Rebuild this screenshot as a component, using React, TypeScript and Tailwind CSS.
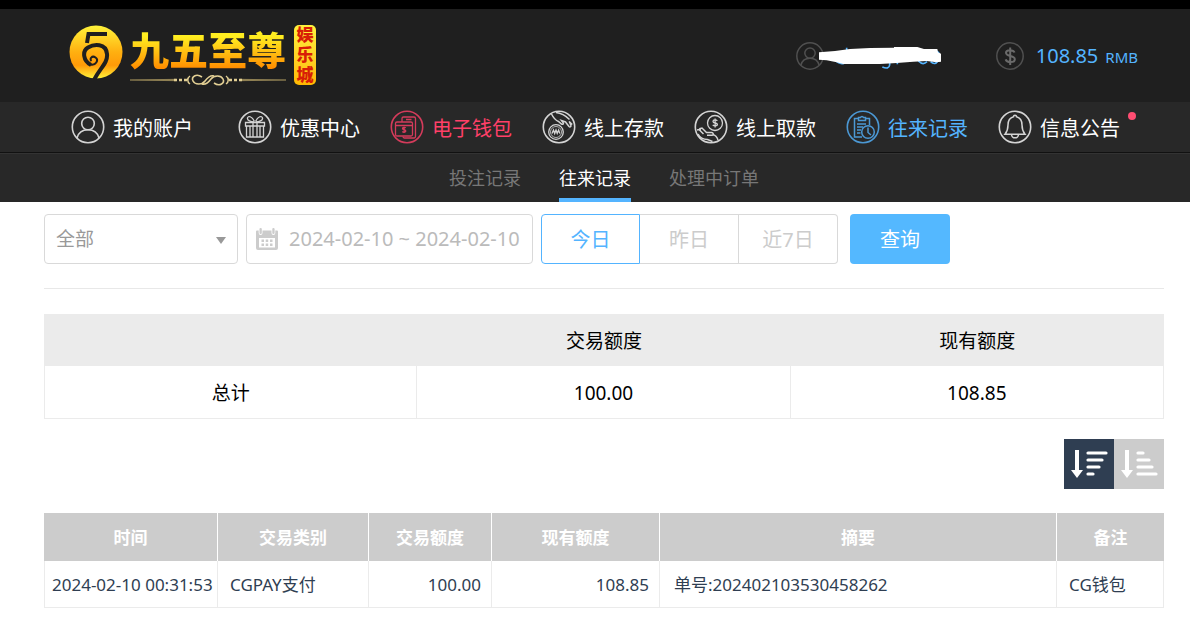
import * as React from 'react'
import { useState } from 'react'

const menuItems = [
	{ key: 'account', label: '我的账户', color: 'text-white', icon: <AccountIcon /> },
	{ key: 'promo', label: '优惠中心', color: 'text-white', icon: <GiftIcon /> },
	{ key: 'wallet', label: '电子钱包', color: 'text-[#ff4068]', icon: <WalletIcon /> },
	{ key: 'deposit', label: '线上存款', color: 'text-white', icon: <DepositIcon /> },
	{ key: 'withdraw', label: '线上取款', color: 'text-white', icon: <WithdrawIcon /> },
	{ key: 'history', label: '往来记录', color: 'text-[#54b4ff]', icon: <HistoryIcon /> },
	{ key: 'notice', label: '信息公告', color: 'text-white', icon: <BellIcon />, unread: true },
]

const tabs = ['投注记录', '往来记录', '处理中订单']
const dayRanges = ['今日', '昨日', '近7日']

const records = [
	{
		time: '2024-02-10 00:31:53',
		type: 'CGPAY支付',
		amount: '100.00',
		balance: '108.85',
		summary: '单号:202402103530458262',
		remark: 'CG钱包',
	},
]

function CircleIcon({ children }: { children: React.ReactNode }) {
	return (
		<svg width="34" height="34" viewBox="0 0 34 34" fill="none" stroke="currentColor" strokeWidth="1.3" className="shrink-0 opacity-80" aria-hidden="true">
			<circle cx="17" cy="17" r="15.7" strokeWidth="1.6" />
			{children}
		</svg>
	)
}

function AccountIcon() {
	return (
		<CircleIcon>
			<circle cx="17" cy="13.5" r="6.3" strokeWidth="1.6" />
			<path d="M6 28C7.500 22.500 12 19.800 17 19.800S26.500 22.500 28 28" strokeWidth="1.6" />
		</CircleIcon>
	)
}

function GiftIcon() {
	return (
		<CircleIcon>
			<path d="M7.500 12.500h19v3.500h-19zM8.500 16h17v11h-17zM15 12.500V27M19 12.500V27M12 16v11M22 16v11" />
			<path d="M16 12C13 12 9 10.500 9.500 8S14 6 16.500 11.500M18 12C21 12 25 10.500 24.500 8S20 6 17.500 11.500" />
		</CircleIcon>
	)
}

function WalletIcon() {
	return (
		<CircleIcon>
			<path d="M12 12V8.500a1.500 1.500 0 0 1 1.500-1.500H24a1.500 1.500 0 0 1 1.500 1.500v18A1.500 1.500 0 0 1 24 28h-9.500a1.500 1.500 0 0 1-1.500-1.500" />
			<rect x="5.5" y="12" width="17" height="14" rx="1.5" />
			<path d="M5.500 15.500h17M16 9.500h5.500M15.800 17.800c-1-.8-3.300-.7-3.300.6 0 1.700 3.300.8 3.300 2.600 0 1.400-2.400 1.400-3.500.4M14.100 16.700v6.300" />
		</CircleIcon>
	)
}

function DepositIcon() {
	return (
		<CircleIcon>
			<circle cx="14" cy="22" r="7.3" />
			<circle cx="14" cy="22" r="5.5" strokeWidth="0.8" />
			<path d="M10 23.500l1.500-3.500 1.200 3.500 1.300-3.500 1.200 3.500 1.400-3.500 1.200 3.500" />
			<path d="M9.500 4c2 4 4 6.500 7 7.500l3 2.500c1.500.8 2.500-.5 1.500-1.500l-1.500-2 4 1.500 3.500 4.500c1 1 2.500 0 1.800-1.500l-1.600-3.500 3 3M14 2.500c5 .5 9.500 3 13.500 7" strokeWidth="1.5" />
		</CircleIcon>
	)
}

function WithdrawIcon() {
	return (
		<CircleIcon>
			<circle cx="21" cy="13" r="7.5" />
			<path d="M23.300 10.800c-1-1.200-4.300-1.300-4.300.6 0 2.300 4.400.9 4.400 3.100 0 1.900-3.500 1.700-4.700.4M21.100 8.500v9" />
			<path d="M3 20l2-.5 4.500 4.500M6.500 20.500l-.5-2 2-.5 4.500 4.500h5c2 0 2.500 2.500.5 2.800h-5M18.500 24.500c2.500.5 4.500 2.300 5.500 5.500M4 24c2 4 5 5.500 9.500 5.500l5 2" strokeWidth="1.5" />
		</CircleIcon>
	)
}

function HistoryIcon() {
	return (
		<CircleIcon>
			<path d="M16 27H8.500V8.500H13M19 8.500h4.500V15M12.500 10.500v-3H14.500a1.600 1.600 0 0 1 3 0H19.500v3z" strokeWidth="1.5" />
			<path d="M11 14h9M11 17h6M11 20h4M11 23h3.500" />
			<circle cx="22" cy="22" r="6.3" strokeWidth="1.5" />
			<path d="M22 17.500V22.500l3 2.500" strokeWidth="1.5" />
		</CircleIcon>
	)
}

function BellIcon() {
	return (
		<CircleIcon>
			<path d="M15.500 6.700a1.500 1.500 0 0 1 3 0c4 1 5.500 4.300 5.500 8.300 0 4 .8 6.500 3 9.300H7c2.200-2.800 3-5.300 3-9.300 0-4 1.500-7.300 5.500-8.300zM13.500 24.500a3.500 3.300 0 0 0 7 0" strokeWidth="1.5" />
		</CircleIcon>
	)
}

function Logo() {
	return (
		<a href="#" aria-label="九五至尊娱乐城" className="flex items-start">
			<svg width="54" height="54" viewBox="0 0 54 54" fill="none" aria-hidden="true">
				<defs>
					<linearGradient id="gold" x1="0" y1="0" x2="0" y2="1">
						<stop offset="0" stopColor="#fff33a" />
						<stop offset="0.5" stopColor="#ffb010" />
						<stop offset="0.75" stopColor="#ff9a08" />
						<stop offset="1" stopColor="#fff33a" />
					</linearGradient>
				</defs>
				<circle cx="27" cy="27" r="26.5" fill="url(#gold)" />
				<path d="M38 9H19.500L18 18" stroke="#1f1f1f" strokeWidth="4" />
				<path d="M22 40C14 36 13 26 19 22.500S37 18 38 29C39 38 31 43 25 55" stroke="#1f1f1f" strokeWidth="4" />
				<path d="M21 39.500C27 41 30 35 26.500 32.500S20 34 22.500 36" stroke="#1f1f1f" strokeWidth="2" />
			</svg>
			<span className="ml-[7px] flex flex-col pt-[2px]">
				<span className="bg-linear-to-b from-[#ffee20] from-20% to-[#ff8c00] to-90% bg-clip-text text-[39px] leading-[46px] font-black text-transparent">九五至尊</span>
				<svg width="156" height="14" viewBox="0 0 156 14" fill="none" stroke="#e2cf94" aria-hidden="true">
					<path d="M0 7l46-.7v1.400zM156 7l-46-.7v1.400z" fill="#a08f5c" stroke="#a08f5c" strokeWidth="0.7" />
					<path d="M44 7h13M99 7h13" strokeWidth="2.500" strokeDasharray="3 2" />
					<path d="M60 3c-3 2-3 6 0 8M96 3c3 2 3 6 0 8" strokeWidth="1.500" />
					<path d="M72 4C66 0 61 4 63 8s9 4 12 0 6-6 9-5M84 10c6 4 11 0 9-4s-9-4-12 0-6 6-9 5" strokeWidth="1.600" />
				</svg>
			</span>
			<span className="ml-2 w-[22px] rounded-[5px] bg-linear-to-b from-[#fff23c] to-[#ffb800] px-[2px] text-center text-[17px] leading-5 font-black break-all text-[#d81e06]">娱乐城</span>
		</a>
	)
}

function Header() {
	return (
		<header className="flex h-[93px] items-center justify-between bg-[#1f1f1f] pr-[52px] pl-[69px]">
			<Logo />
			<div className="flex items-center text-[#54b4ff]">
				<div className="relative w-[200px]">
					<svg width="28" height="28" viewBox="0 0 34 34" fill="none" stroke="#505050" strokeWidth="1.8" aria-hidden="true">
						<circle cx="17" cy="17" r="16" />
						<circle cx="17" cy="13.5" r="6.300" />
						<path d="M6 28C7.500 22.500 12 19.800 17 19.800S26.500 22.500 28 28" />
					</svg>
					{/* masked user name */}
					<svg width="122" height="24" viewBox="117 75 366 72" fill="none" className="absolute top-1 left-[23px]" aria-hidden="true">
						<path d="M200 80v10M170 122q10 8 22 5M307 138q20 8 22-6v-8M352 118v12M415 120q14 14 26 2M452 122q12 12 22-2M450 92q16-10 28 6M420 92q10-8 18-2" stroke="#54b4ff" strokeWidth="5" />
						<path d="M117 94l48-4 45-6 60-3 72-1v-2h70l20 6h40l2 10 9 4v24l-13 2-30-4-40 2-50 4-50 3H190l-20-5-30-6-23-2z" fill="#fff" />
					</svg>
				</div>
				<div className="flex items-center">
					<svg width="28" height="28" viewBox="0 0 28 28" fill="none" stroke="#505050" strokeWidth="1.500" aria-hidden="true">
						<circle cx="14" cy="14" r="13.200" />
						<path d="M18.500 10.500c-1-3-8.500-3.300-8.500.3 0 4.200 8.800 2.200 8.800 6.400 0 3.800-8 3.800-9.200.2M14.200 5.500v17.500" stroke="#6a6a6a" strokeWidth="2" />
					</svg>
					<span className="ml-3 text-[20px] leading-7">108.85</span>
					<span className="ml-[7px] pt-[2px] text-[15px] leading-6">RMB</span>
				</div>
			</div>
		</header>
	)
}

function MainMenu() {
	return (
		<nav className="flex h-[51px] items-center gap-[30px] border-b border-[#111111] bg-[#282828] pl-[71px]">
			{menuItems.map((item) => (
				<a key={item.key} href="#" className={`relative flex items-center gap-2 text-[20px] leading-7 whitespace-nowrap first:mr-[15px] ${item.color}`}>
					{item.icon}
					<span className="pt-[3px]">{item.label}</span>
					{item.unread && <span className="absolute top-[2px] -right-4 size-2 rounded-full bg-[#ff4d72]" />}
				</a>
			))}
		</nav>
	)
}

function SubTabs() {
	const [active, setActive] = useState('往来记录')

	return (
		<div className="flex h-[49px] justify-center gap-[38px] border-t border-[#333333] bg-[#282828] pr-[26px] pl-11">
			{tabs.map((tab) => (
				<button
					key={tab}
					type="button"
					onClick={() => setActive(tab)}
					className={
						tab === active
							? 'border-b-4 border-[#54b4ff] pt-[3px] text-[18px] leading-6 text-white'
							: 'border-b-4 border-transparent pt-[3px] text-[18px] leading-6 text-[#777777]'
					}
				>
					{tab}
				</button>
			))}
		</div>
	)
}

function Filters() {
	const [range, setRange] = useState('今日')

	return (
		<form className="flex items-center gap-3 border-b border-[#e8e8e8] pt-3 pb-6" onSubmit={(e) => e.preventDefault()}>
			<div className="flex gap-2">
				<div className="relative w-[194px]">
					<select aria-label="交易类别" className="h-[50px] w-full appearance-none rounded-[4px] border border-[#d9d9d9] bg-white pl-[11px] text-[19px] text-[#999999]">
						<option>全部</option>
					</select>
					<svg width="10" height="7" viewBox="0 0 10 7" fill="#999999" className="pointer-events-none absolute top-[23px] right-3" aria-hidden="true">
						<path d="M0 0h10L5 7z" />
					</svg>
				</div>
				<label className="flex h-[50px] w-[287px] items-center gap-[11px] rounded-[4px] border border-[#d9d9d9] pl-[9px]">
					<svg width="22" height="22" viewBox="0 0 22 22" fill="#cccccc" className="shrink-0" aria-label="日期">
						<path d="M0 3.500A1 1 0 0 1 1 2.500h1.700V5a1.900 1.900 0 0 0 3.800 0V2.500h9V5a1.900 1.900 0 0 0 3.800 0V2.500H21a1 1 0 0 1 1 1V8H0z" />
						<rect x="3.5" y="0" width="2.300" height="6" rx="1.100" />
						<rect x="16.300" y="0" width="2.300" height="6" rx="1.100" />
						<path fillRule="evenodd" d="M0 8h22v12a2 2 0 0 1-2 2H2a2 2 0 0 1-2-2zm3 2v9.500h16V10z" />
						<path d="M5.500 11.500h2.500v2.500H5.500zM9.700 11.500h2.500v2.500H9.700zM14 11.500h2.500v2.500H14zM5.500 15.500h2.500v2.500H5.500zM9.700 15.500h2.500v2.500H9.700zM14 15.500h2.500v2.500H14z" />
					</svg>
					<input type="text" readOnly defaultValue="2024-02-10 ~ 2024-02-10" className="w-full min-w-0 text-[20px] leading-7 text-[#bbbbbb] outline-none" />
				</label>
				<div className="flex">
					{dayRanges.map((day) => (
						<button
							key={day}
							type="button"
							onClick={() => setRange(day)}
							className={
								day === range
									? 'h-[50px] w-[99px] border border-[#54b4ff] pt-[2px] text-[20px] text-[#54b4ff] first:rounded-l-[4px] last:rounded-r-[4px]'
									: 'h-[50px] w-[99px] border border-[#d9d9d9] pt-[2px] text-[20px] text-[#cccccc] not-first:border-l-0 first:rounded-l-[4px] last:rounded-r-[4px]'
							}
						>
							{day}
						</button>
					))}
				</div>
			</div>
			<button type="submit" className="h-[50px] w-[100px] rounded-[4px] bg-[#54b8ff] pt-[2px] text-[20px] text-white">
				查询
			</button>
		</form>
	)
}

function SummaryTable() {
	return (
		<table className="mt-[25px] w-full table-fixed border-separate border-spacing-0 text-center text-[19px] leading-7 text-black">
			<thead>
				<tr className="h-[52px] bg-[#ebebeb]">
					<th></th>
					<th className="pt-[2px] font-normal">交易额度</th>
					<th className="pt-[2px] font-normal">现有额度</th>
				</tr>
			</thead>
			<tbody>
				<tr className="h-[53px]">
					<td className="border-x border-b border-[#ebebeb] pt-[2px]">总计</td>
					<td className="border-r border-b border-[#ebebeb] pt-[2px]">100.00</td>
					<td className="border-r border-b border-[#ebebeb] pt-[2px]">108.85</td>
				</tr>
			</tbody>
		</table>
	)
}

function SortButtons() {
	return (
		<div className="mt-5 flex justify-end">
			<button type="button" aria-label="降序" className="flex size-[50px] items-center justify-center bg-[#2f3e52]">
				<svg width="38" height="28" viewBox="0 0 38 28" fill="#fff" aria-hidden="true">
					<path d="M5 0h4v20h4l-6 8-6-8h4z" />
					<path d="M18 3h18M18 10h14M18 17h11M18 24h5" stroke="#fff" strokeWidth="3.200" strokeLinecap="round" />
				</svg>
			</button>
			<button type="button" aria-label="升序" className="flex size-[50px] items-center justify-center bg-[#cccccc]">
				<svg width="38" height="28" viewBox="0 0 38 28" fill="#fff" aria-hidden="true">
					<path d="M5 0h4v20h4l-6 8-6-8h4z" />
					<path d="M18 3h5M18 10h11M18 17h14M18 24h18" stroke="#fff" strokeWidth="3.200" strokeLinecap="round" />
				</svg>
			</button>
		</div>
	)
}

function RecordTable() {
	return (
		<table className="mt-6 w-full table-fixed border-separate border-spacing-0 text-[17px] leading-6 text-[#2f3e52]">
			<thead>
				<tr className="h-12 bg-[#cccccc] text-white">
					<th className="w-[174px] border-r border-white pt-[2px]">时间</th>
					<th className="w-[151px] border-r border-white pt-[2px]">交易类别</th>
					<th className="w-[123px] border-r border-white pt-[2px]">交易额度</th>
					<th className="w-[168px] border-r border-white pt-[2px]">现有额度</th>
					<th className="border-r border-white pt-[2px]">摘要</th>
					<th className="w-[107px] pt-[2px]">备注</th>
				</tr>
			</thead>
			<tbody>
				{records.map((record) => (
					<tr key={record.time} className="h-[47px]">
						<td className="border-x border-b border-[#ebebeb] pt-[2px] pl-[7px] whitespace-nowrap">{record.time}</td>
						<td className="border-r border-b border-[#ebebeb] pt-[2px] pl-3">{record.type}</td>
						<td className="border-r border-b border-[#ebebeb] pt-[2px] pr-[10px] text-right">{record.amount}</td>
						<td className="border-r border-b border-[#ebebeb] pt-[2px] pr-[10px] text-right">{record.balance}</td>
						<td className="border-r border-b border-[#ebebeb] pt-[2px] pl-[14px]">{record.summary}</td>
						<td className="border-r border-b border-[#ebebeb] pt-[2px] pl-3">{record.remark}</td>
					</tr>
				))}
			</tbody>
		</table>
	)
}

export default function App() {
	return (
		<div className="min-h-screen border-t-[9px] border-black bg-white font-['Noto_Sans','Noto_Sans_CJK_SC',sans-serif]">
			<Header />
			<MainMenu />
			<SubTabs />
			<main className="pr-[26px] pl-11">
				<Filters />
				<SummaryTable />
				<SortButtons />
				<RecordTable />
			</main>
		</div>
	)
}
